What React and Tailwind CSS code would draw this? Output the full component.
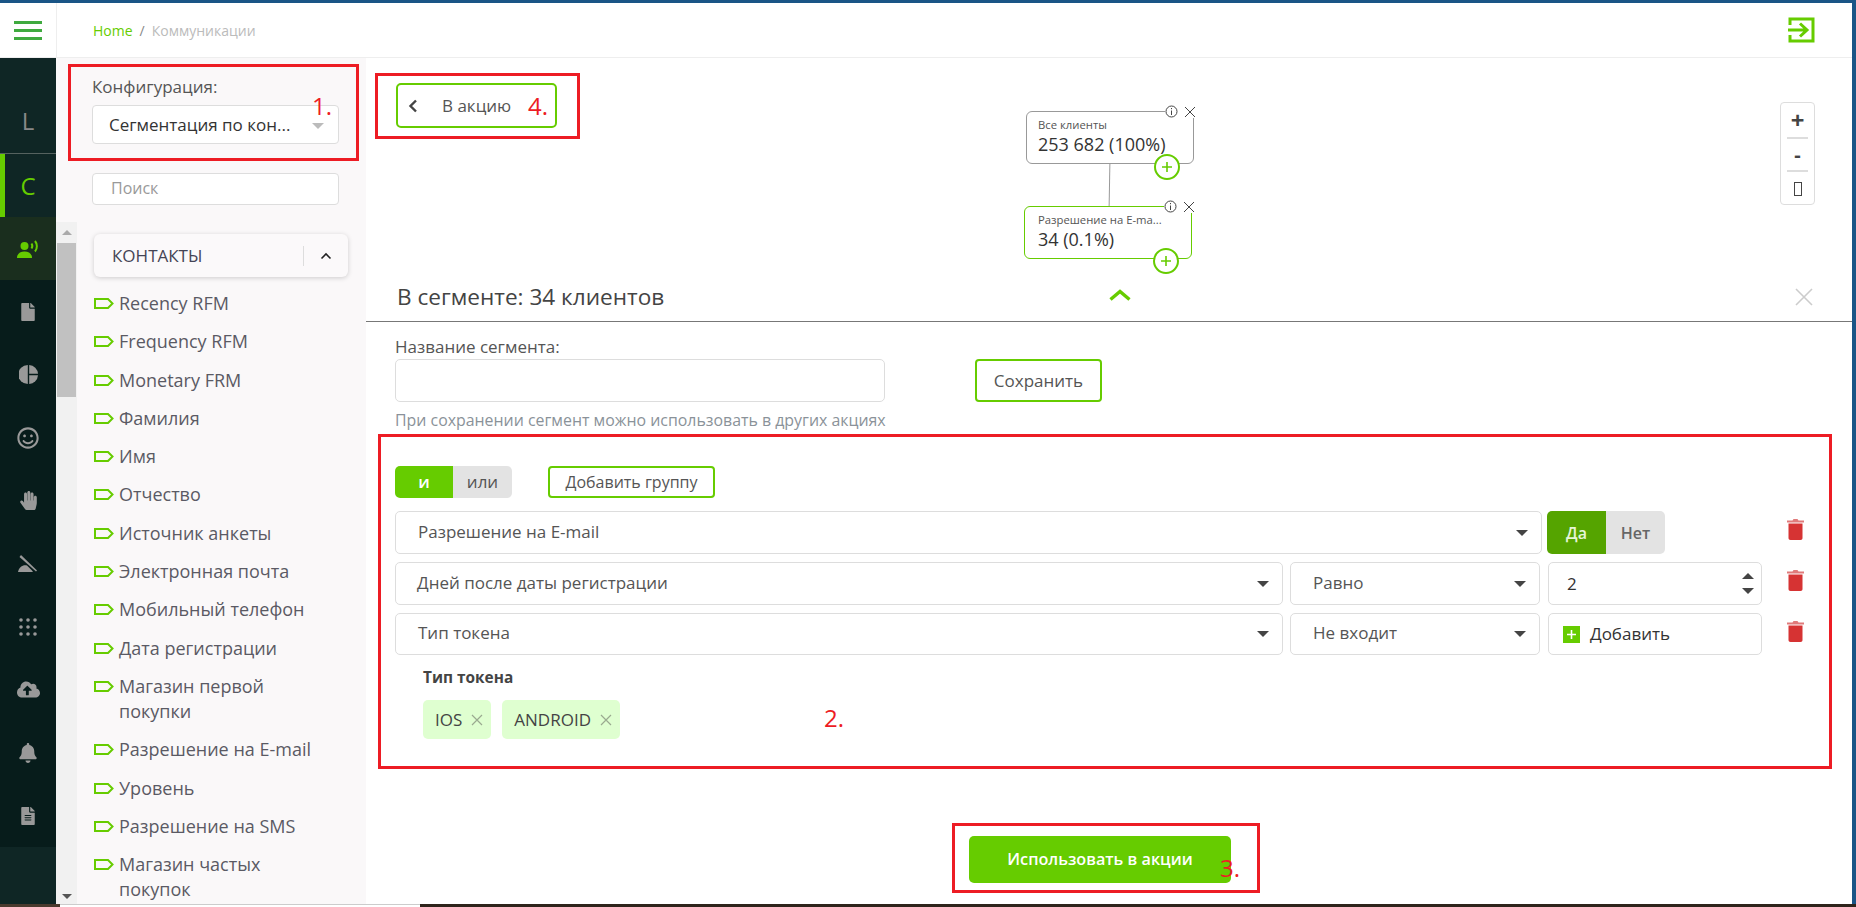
import {
  FaBell,
  FaCloudUploadAlt,
  FaFile,
  FaFileAlt,
  FaHandPaper,
  FaRegSmile,
} from "react-icons/fa";

const fields = [
  "Recency RFM",
  "Frequency RFM",
  "Monetary FRM",
  "Фамилия",
  "Имя",
  "Отчество",
  "Источник анкеты",
  "Электронная почта",
  "Мобильный телефон",
  "Дата регистрации",
  "Магазин первой покупки",
  "Разрешение на E-mail",
  "Уровень",
  "Разрешение на SMS",
  "Магазин частых покупок",
];

function Caret({ className = "border-x-[6px] border-t-[6px] border-t-[#444]" }) {
  return <span className={`h-0 w-0 border-x-transparent ${className}`} />;
}

function TagIcon() {
  return (
    <svg width="20" height="11" viewBox="0 0 20 11" className="mt-[7px] shrink-0" fill="none">
      <path d="M1 1H14L18.5 5.5L14 10H1Z" stroke="#66cc00" strokeWidth="2" />
    </svg>
  );
}

function PlusCircle({ className }) {
  return (
    <div
      className={`absolute flex h-[26px] w-[26px] items-center justify-center rounded-full border-2 border-[#66cc00] bg-white ${className}`}
    >
      <svg width="12" height="12" viewBox="0 0 12 12">
        <path d="M6 1V11M1 6H11" stroke="#66cc00" strokeWidth="1.6" />
      </svg>
    </div>
  );
}

function NodeControls({ className }) {
  return (
    <div className={`absolute flex items-center bg-white ${className}`}>
      <svg width="13" height="13" viewBox="0 0 13 13" fill="none">
        <circle cx="6.5" cy="6.5" r="5.5" stroke="#444" />
        <path d="M6.5 5.5V10M6.5 3V4.2" stroke="#444" />
      </svg>
      <svg width="12" height="12" viewBox="0 0 12 12" className="ml-[6px]" fill="none">
        <path d="M1 1L11 11M11 1L1 11" stroke="#444" />
      </svg>
    </div>
  );
}

function Node({ title, value, className, border }) {
  return (
    <div
      className={`absolute h-[53px] w-[168px] rounded-[6px] border bg-white pt-[5px] ${border} ${className}`}
    >
      <div className="text-[11.3px] leading-[15px] text-[#555]">{title}</div>
      <div className="text-[18px] leading-[25px] text-[#333]">{value}</div>
    </div>
  );
}

function Select({ label, width, labelClass = "pl-[22px]" }) {
  return (
    <div
      className={`flex h-full items-center justify-between rounded-[5px] border border-[#ddd] bg-white pr-[13px] text-[17px] text-[#555] ${labelClass} ${width}`}
    >
      <span className="mb-[2px]">{label}</span>
      <Caret />
    </div>
  );
}

function SideIcon({ children, active }) {
  return (
    <div
      className={`flex h-[63px] items-center justify-center ${
        active ? "bg-[#1a2e1e] text-[#66cc00]" : "text-[#999]"
      }`}
    >
      {children}
    </div>
  );
}

function Trash({ className = "ml-[25px]" }) {
  return (
    <svg width="17" height="21" viewBox="0 0 17 21" className={`mt-[8px] shrink-0 ${className}`}>
      <path d="M5.5 1.5L6.5 0H10.5L11.5 1.5H17V3.5H0V1.5Z" fill="#e07a7a" />
      <path d="M1.5 4.5H15.5V19C15.5 20 14.8 21 13.5 21H3.5C2.2 21 1.5 20 1.5 19Z" fill="#d63333" />
    </svg>
  );
}

function Chip({ label }) {
  return (
    <div className="flex h-[39px] items-center gap-[9px] rounded-[5px] bg-[#dfffd0] pl-[12px] pr-[8px] text-[17px] text-[#444]">
      {label}
      <svg width="12" height="12" viewBox="0 0 12 12" fill="none">
        <path d="M1 1L11 11M11 1L1 11" stroke="#9aaa90" strokeWidth="1.2" />
      </svg>
    </div>
  );
}

function RedBox({ className, number, numberClass }) {
  return (
    <div className={`pointer-events-none absolute border-[3px] border-[#ed1c24] ${className}`}>
      <span className={`absolute text-[24px] leading-none text-[#ed1c24] ${numberClass}`}>
        {number}
      </span>
    </div>
  );
}

export default function App() {
  return (
    <div className="relative flex h-[907px] w-[1856px] flex-col overflow-hidden bg-white font-['Open_Sans',sans-serif]">
      <div className="h-[3px] shrink-0 bg-[#1a5586]" />

      <header className="flex h-[55px] shrink-0 items-center border-b border-[#eee]">
        <div className="flex h-full w-[57px] shrink-0 flex-col justify-center gap-[5px] border-r border-[#eee] pl-[14px]">
          <span className="h-[3px] w-[28px] bg-[#3faa3f]" />
          <span className="h-[3px] w-[28px] bg-[#3faa3f]" />
          <span className="h-[3px] w-[28px] bg-[#3faa3f]" />
        </div>
        <div className="ml-[36px] text-[14px] text-[#bbb]">
          <span className="text-[#66cc00]">Home</span>
          <span className="mx-[7px] text-[#888]">/</span>
          Коммуникации
        </div>
        <svg width="27" height="26" viewBox="0 0 27 26" fill="none" className="ml-auto mr-[41px]">
          <path d="M2 8V2H25V24H2V18" stroke="#66cc00" strokeWidth="3" />
          <path d="M0 13H18M12 6.5L19 13L12 19.5" stroke="#66cc00" strokeWidth="3" />
        </svg>
      </header>

      <div className="flex min-h-0 flex-1">
        <nav className="flex w-[56px] shrink-0 flex-col bg-[#071c1b]">
          <div className="flex h-[96px] items-center justify-center border-b border-[#55625f] bg-[#0f2625] pt-[31px] text-[24px] text-[#888]">
            L
          </div>
          <div className="flex h-[63px] items-center justify-center border-l-[5px] border-[#66cc00] bg-[#0f2625] pr-[5px] text-[24px] text-[#66cc00]">
            C
          </div>
          <SideIcon active>
            <svg width="22" height="18" viewBox="0 0 22 18" fill="none">
              <circle cx="7.5" cy="6" r="4" fill="#66cc00" />
              <path d="M0 18C0 13.5 3.5 11.5 7.5 11.5C11.5 11.5 15 13.5 15 18Z" fill="#66cc00" />
              <path d="M14.5 3.5C15.5 5 15.5 7 14.5 8.5" stroke="#66cc00" strokeWidth="2" />
              <path d="M18 1C20.5 4 20.5 8.5 18 11.5" stroke="#66cc00" strokeWidth="2" />
            </svg>
          </SideIcon>
          <SideIcon><FaFile size={18} /></SideIcon>
          <SideIcon>
            <svg width="19" height="19" viewBox="0 0 19 19" fill="#999">
              <path d="M8.8 0V19A9.5 9.5 0 0 1 8.8 0Z" />
              <path d="M10.2 0A9.5 9.5 0 0 1 19 8.8H10.2Z" />
              <path d="M10.2 10.2H19A9.5 9.5 0 0 1 10.2 19Z" />
            </svg>
          </SideIcon>
          <SideIcon><FaRegSmile size={22} /></SideIcon>
          <SideIcon><FaHandPaper size={19} /></SideIcon>
          <SideIcon>
            <svg width="20" height="18" viewBox="0 0 20 18" fill="#999">
              <path d="M3 0L19 15.5L18 16.5L1.5 2Z" />
              <path d="M0 17C1 12 5 9.5 9 10.5L14 15.5L15 17Z" />
            </svg>
          </SideIcon>
          <SideIcon>
            <svg width="18" height="18" viewBox="0 0 18 18" fill="#999">
              {[2, 9, 16].map((y) =>
                [2, 9, 16].map((x) => <circle key={`${x}-${y}`} cx={x} cy={y} r="1.8" />),
              )}
            </svg>
          </SideIcon>
          <SideIcon><FaCloudUploadAlt size={23} /></SideIcon>
          <SideIcon><FaBell size={20} /></SideIcon>
          <SideIcon><FaFileAlt size={18} /></SideIcon>
          <div className="flex-1 bg-[#0f2625]" />
        </nav>

        <aside className="flex w-[310px] shrink-0 flex-col bg-[#faf8f9]">
          <div className="px-[36px] pt-[19px]">
            <div className="text-[17px] leading-[20px] text-[#555]">Конфигурация:</div>
            <div className="mt-[8px] flex h-[39px] w-[247px] items-center justify-between rounded-[4px] border border-[#ddd] bg-white pl-[16px] pr-[14px] text-[17px] text-[#333]">
              <span>Сегментация по кон...</span>
              <Caret className="mt-[2px] border-x-[6px] border-t-[6px] border-t-[#bbb]" />
            </div>
            <div className="mt-[29px] flex h-[32px] w-[247px] items-center rounded-[4px] border border-[#ddd] bg-white pb-[2px] pl-[18px] text-[16px] text-[#999]">
              Поиск
            </div>
          </div>
          <div className="mt-[17px] flex min-h-0 flex-1">
            <div className="flex w-[21px] shrink-0 flex-col bg-[#f1f1f1] pl-[1px]">
              <div className="flex h-[21px] items-center justify-center">
                <span className="h-0 w-0 border-x-[5px] border-b-[5px] border-x-transparent border-b-[#aaa]" />
              </div>
              <div className="h-[154px] w-[19px] bg-[#c1c1c1]" />
              <div className="mt-auto flex h-[21px] items-center justify-center">
                <Caret className="border-x-[5px] border-t-[5px] border-t-[#555]" />
              </div>
            </div>
            <div className="min-w-0 flex-1 overflow-hidden pl-[17px] pt-[12px]">
              <div className="flex h-[43px] w-[254px] items-center rounded-[6px] bg-[#fbf9fa] pl-[18px] text-[17px] text-[#445] shadow-[0_1px_5px_rgba(0,0,0,0.18)]">
                <span>КОНТАКТЫ</span>
                <span className="ml-auto h-[20px] w-px bg-[#ddd]" />
                <svg width="12" height="8" viewBox="0 0 12 8" fill="none" className="mx-[16px]">
                  <path d="M1.5 6.5L6 2L10.5 6.5" stroke="#222" strokeWidth="1.6" />
                </svg>
              </div>
              <ul className="mt-[14px] flex flex-col gap-[13.3px] text-[18px] leading-[25px] text-[#5a5a64]">
                {fields.map((field) => (
                  <li key={field} className="flex gap-[5px]">
                    <TagIcon />
                    <span className="w-[210px]">{field}</span>
                  </li>
                ))}
              </ul>
            </div>
          </div>
        </aside>

        <main className="min-w-0 flex-1 pr-[4px]">
          <section className="relative h-[264px] border-b border-[#777]">
            <button
              type="button"
              className="absolute left-[30px] top-[25px] flex h-[45px] w-[161px] items-center rounded-[5px] border-2 border-[#66cc00] pl-[10px] text-[17px] text-[#555]"
            >
              <svg width="10" height="14" viewBox="0 0 10 14" fill="none">
                <path d="M8 1.5L2.5 7L8 12.5" stroke="#444" strokeWidth="2.4" />
              </svg>
              <span className="ml-[24px]">В акцию</span>
            </button>

            <div className="absolute left-[743px] top-[106px] h-[42px] w-[1px] rotate-[1deg] bg-[#999]" />
            <Node className="left-[660px] top-[53px] pl-[11px]" border="border-[#999]" title="Все клиенты" value="253 682 (100%)" />
            <Node className="left-[658px] top-[148px] pl-[13px]" border="border-[#66cc00]" title="Разрешение на E-ma..." value="34 (0.1%)" />
            <NodeControls className="left-[799px] top-[47px]" />
            <NodeControls className="left-[798px] top-[142px]" />
            <PlusCircle className="left-[788px] top-[96px]" />
            <PlusCircle className="left-[787px] top-[190px]" />
            <svg width="22" height="12" viewBox="0 0 22 12" fill="none" className="absolute left-[743px] top-[231px]">
              <path d="M1.5 10.5L11 2.5L20.5 10.5" stroke="#66cc00" strokeWidth="3.4" />
            </svg>

            <div className="absolute left-[1414px] top-[44px] flex h-[103px] w-[35px] flex-col items-center rounded-[4px] border border-[#ddd] px-[6px] text-[#444]">
              <span className="flex h-[34px] items-center text-[24px] font-bold leading-none">+</span>
              <span className="h-[2px] w-full bg-[#ddd]" />
              <span className="flex h-[31px] items-center text-[20px] font-bold leading-none">-</span>
              <span className="h-[2px] w-full bg-[#ddd]" />
              <span className="mt-[10px] h-[14px] w-[8px] border border-[#444]" />
            </div>

            <div className="absolute bottom-[9px] left-[31px] text-[22.6px] leading-[30px] text-[#444]">
              В сегменте: 34 клиентов
            </div>
            <svg width="18" height="18" viewBox="0 0 18 18" fill="none" className="absolute bottom-[15px] left-[1429px]">
              <path d="M1 1L17 17M17 1L1 17" stroke="#ccc" strokeWidth="1.6" />
            </svg>
          </section>

          <section className="pl-[29px]">
            <div className="mt-[15px] text-[17px] leading-[20px] text-[#555]">Название сегмента:</div>
            <div className="mt-[2px] flex items-stretch">
              <div className="h-[43px] w-[490px] rounded-[5px] border border-[#ddd] bg-white" />
              <button
                type="button"
                className="ml-[90px] h-[43px] w-[127px] rounded-[4px] border-2 border-[#66cc00] text-[17px] text-[#555]"
              >
                Сохранить
              </button>
            </div>
            <div className="mt-[8px] text-[15.9px] leading-[20px] text-[#8a9299]">
              При сохранении сегмент можно использовать в других акциях
            </div>

            <div className="mt-[36px] flex h-[32px] items-center">
              <div className="flex h-full w-[117px] overflow-hidden rounded-[5px] text-[17px]">
                <span className="flex w-[58px] items-center justify-center bg-[#66cc00] font-semibold text-white">и</span>
                <span className="flex flex-1 items-center justify-center bg-[#e3e3e3] text-[#555]">или</span>
              </div>
              <button
                type="button"
                className="ml-[36px] h-full w-[167px] rounded-[4px] border-2 border-[#66cc00] text-[16px] text-[#555]"
              >
                Добавить группу
              </button>
            </div>

            <div className="mt-[13px] flex h-[43px] items-stretch">
              <Select label="Разрешение на E-mail" width="w-[1147px]" />
              <div className="ml-[5px] flex w-[118px] overflow-hidden rounded-[5px] text-[16px] font-semibold">
                <span className="flex w-[59px] items-center justify-center bg-[#55a400] text-[#e6f5d6]">Да</span>
                <span className="flex flex-1 items-center justify-center bg-[#e3e3e3] text-[#666]">Нет</span>
              </div>
              <Trash className="ml-[122px]" />
            </div>

            <div className="mt-[8px] flex h-[43px] items-stretch">
              <Select label="Дней после даты регистрации" width="w-[888px]" labelClass="pl-[21px]" />
              <div className="ml-[7px] flex">
                <Select label="Равно" width="w-[250px]" />
              </div>
              <div className="ml-[8px] flex w-[214px] items-center justify-between rounded-[5px] border border-[#ddd] bg-white pl-[18px] pr-[7px] text-[17px] text-[#333]">
                2
                <div className="flex flex-col gap-[9px]">
                  <Caret className="border-x-[6px] border-b-[6px] border-b-[#444]" />
                  <Caret />
                </div>
              </div>
              <Trash />
            </div>

            <div className="mt-[8px] flex h-[42px] items-stretch">
              <Select label="Тип токена" width="w-[888px]" />
              <div className="ml-[7px] flex">
                <Select label="Не входит" width="w-[250px]" />
              </div>
              <div className="ml-[8px] flex w-[214px] items-center rounded-[5px] border border-[#ddd] bg-white pl-[14px] text-[17px] text-[#333]">
                <span className="flex h-[17px] w-[17px] items-center justify-center bg-[#66cc00]">
                  <svg width="9" height="9" viewBox="0 0 9 9">
                    <path d="M4.5 0V9M0 4.5H9" stroke="#fff" strokeWidth="1.6" />
                  </svg>
                </span>
                <span className="ml-[10px]">Добавить</span>
              </div>
              <Trash />
            </div>

            <div className="ml-[28px] mt-[13px] text-[15.4px] font-bold leading-[20px] text-[#444]">Тип токена</div>
            <div className="ml-[28px] mt-[12px] flex gap-[11px]">
              <Chip label="IOS" />
              <Chip label="ANDROID" />
            </div>

            <div className="ml-[574px] mt-[97px] flex h-[47px] w-[262px] items-center justify-center rounded-[5px] bg-[#66cc00] text-[16.2px] font-semibold text-white">
              Использовать в акции
            </div>
          </section>
        </main>
      </div>

      <RedBox className="left-[68px] top-[64px] h-[97px] w-[291px]" number="1." numberClass="left-[241px] top-[27px]" />
      <RedBox className="left-[375px] top-[73px] h-[66px] w-[205px]" number="4." numberClass="left-[150px] top-[18px]" />
      <RedBox className="left-[378px] top-[434px] h-[335px] w-[1454px]" number="2." numberClass="left-[443px] top-[269px]" />
      <RedBox className="left-[952px] top-[823px] h-[70px] w-[308px]" number="3." numberClass="left-[265px] top-[30px]" />

      <div className="absolute right-0 top-0 h-full w-[4px] bg-[#1a5586]" />
      <div className="absolute bottom-0 left-0 flex h-[3px] w-full">
        <span className="w-[60px] bg-[#4a3a2e]" />
        <span className="w-[360px] border-t border-[#ccc] bg-white" />
        <span className="flex-1 bg-[#2e241b]" />
      </div>
    </div>
  );
}
